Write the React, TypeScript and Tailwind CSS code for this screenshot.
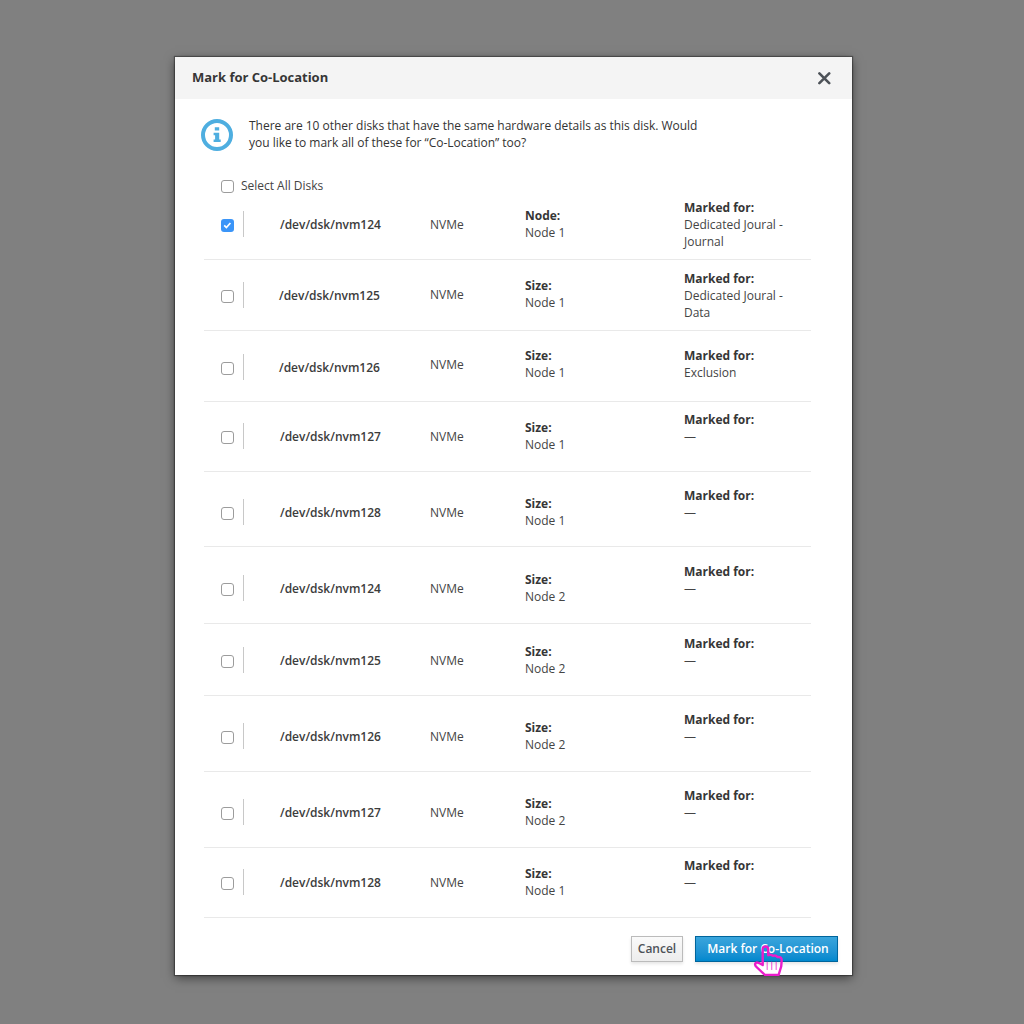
import React from "react";

type Disk = {
  name: string;
  label: string;
  node: string;
  marked: string[];
  row: string;
  check: string;
  nameX: string;
  info: string;
  mark: string;
};

const disks: Disk[] = [
  { name: "nvm124", label: "Node:", node: "Node 1", marked: ["Dedicated Joural -", "Journal"], row: "h-[61px]", check: "pt-[12px]", nameX: "pl-[36px]", info: "pt-[8px]", mark: "pt-0" },
  { name: "nvm125", label: "Size:", node: "Node 1", marked: ["Dedicated Joural -", "Data"], row: "h-[71px]", check: "pt-[22px]", nameX: "pl-[35px]", info: "pt-[17px]", mark: "pt-[10px]" },
  { name: "nvm126", label: "Size:", node: "Node 1", marked: ["Exclusion"], row: "h-[71px]", check: "pt-[23px]", nameX: "pl-[35px]", info: "pt-[16px]", mark: "pt-[16px]" },
  { name: "nvm127", label: "Size:", node: "Node 1", marked: ["—"], row: "h-[70px]", check: "pt-[21px]", nameX: "pl-[36px]", info: "pt-[17px]", mark: "pt-[9px]" },
  { name: "nvm128", label: "Size:", node: "Node 1", marked: ["—"], row: "h-[75px]", check: "pt-[27px]", nameX: "pl-[36px]", info: "pt-[23px]", mark: "pt-[15px]" },
  { name: "nvm124", label: "Size:", node: "Node 2", marked: ["—"], row: "h-[77px]", check: "pt-[28px]", nameX: "pl-[36px]", info: "pt-[24px]", mark: "pt-[16px]" },
  { name: "nvm125", label: "Size:", node: "Node 2", marked: ["—"], row: "h-[72px]", check: "pt-[23px]", nameX: "pl-[36px]", info: "pt-[19px]", mark: "pt-[11px]" },
  { name: "nvm126", label: "Size:", node: "Node 2", marked: ["—"], row: "h-[76px]", check: "pt-[27px]", nameX: "pl-[36px]", info: "pt-[23px]", mark: "pt-[15px]" },
  { name: "nvm127", label: "Size:", node: "Node 2", marked: ["—"], row: "h-[76px]", check: "pt-[27px]", nameX: "pl-[36px]", info: "pt-[23px]", mark: "pt-[15px]" },
  { name: "nvm128", label: "Size:", node: "Node 1", marked: ["—"], row: "h-[70px]", check: "pt-[21px]", nameX: "pl-[36px]", info: "pt-[17px]", mark: "pt-[9px]" },
];

function Checkbox({ checked = false }: { checked?: boolean }) {
  return checked ? (
    <span className="flex h-[13px] w-[13px] shrink-0 items-center justify-center rounded-[3px] bg-[#3b95f8]">
      <svg className="h-[13px] w-[13px]" viewBox="0 0 13 13" fill="none" stroke="#fff" strokeWidth="1.7">
        <path d="M3.2 6.3 5.4 8.5 9.4 4" />
      </svg>
    </span>
  ) : (
    <span className="h-[13px] w-[13px] shrink-0 rounded-[3px] border border-[#9c9c9c] bg-white" />
  );
}

function DiskRow({ disk, checked }: { disk: Disk; checked: boolean }) {
  return (
    <div className={`grid grid-cols-[226px_95px_159px_1fr] border-b border-[#e9e9e9] ${disk.row}`}>
      <div className={`flex items-start pl-[17px] ${disk.check}`}>
        <div className="flex h-[26px] w-[23px] items-end border-r border-[#c8c8c8] pb-[5px]">
          <Checkbox checked={checked} />
        </div>
        <span className={`pt-[5px] font-semibold text-[#3c3c3c] ${disk.nameX}`}>/dev/dsk/{disk.name}</span>
      </div>
      <div className={disk.info}>
        <div className="pt-[9px]">NVMe</div>
      </div>
      <div className={disk.info}>
        <div className="font-bold text-[#363636]">{disk.label}</div>
        <div>{disk.node}</div>
      </div>
      <div className={disk.mark}>
        <div className="font-bold text-[#363636]">Marked for:</div>
        {disk.marked.map((line) => (
          <div key={line}>{line}</div>
        ))}
      </div>
    </div>
  );
}

export default function App() {
  return (
    <div className="h-[1024px] w-[1024px] overflow-hidden bg-[#808080] pl-[175px] pt-[57px] font-['Open_Sans','Noto_Sans',sans-serif] text-[12px] leading-[17px] tracking-[-0.015px] text-[#444]">
      <div className="flex h-[918px] w-[677px] flex-col bg-white shadow-[0_0_1px_1px_rgba(0,0,0,0.35),0_3px_10px_rgba(0,0,0,0.5)]">
        <header className="flex h-[42px] shrink-0 items-center justify-between bg-[#f4f4f4] pl-[17px] pr-[21px]">
          <h1 className="pb-px text-[13px] font-bold text-[#363636]">Mark for Co-Location</h1>
          <svg className="h-[14px] w-[14px]" viewBox="0 0 14 14" stroke="#4d5258" strokeWidth="2.6" strokeLinecap="round">
            <path d="M2.4 2.4 12.2 12.2M12.2 2.4 2.4 12.2" />
          </svg>
        </header>
        <div className="flex h-[78px] shrink-0 pl-[26px] pt-[18px]">
          <svg className="mt-[2px] h-[32px] w-[32px] shrink-0" viewBox="0 0 32 32" fill="#4eaee0">
            <circle cx="16" cy="16" r="14" fill="none" stroke="#4eaee0" strokeWidth="4" />
            <path d="M13.8 8.2h4.4v3.4h-4.4zM12.6 13.8h5.6v6.7h1.5v2.4h-7.1v-2.4h1.5v-4.3h-1.5z" />
          </svg>
          <p className="pl-4 text-[#333]">
            There are 10 other disks that have the same hardware details as this disk. Would
            <br />
            you like to mark all of these for “Co-Location” too?
          </p>
        </div>
        <div className="flex h-[22px] shrink-0 items-start pl-[46px]">
          <span className="flex pt-[3px]"><Checkbox /></span>
          <span className="pl-[7px]">Select All Disks</span>
        </div>
        <div className="ml-[29px] w-[607px] shrink-0">
          {disks.map((disk, i) => (
            <DiskRow key={i} disk={disk} checked={i === 0} />
          ))}
        </div>
        <footer className="flex justify-end gap-3 pr-[14px] pt-[18px]">
          <button className="h-[26px] w-[52px] border border-[#bbb] bg-linear-to-b from-[#fafafa] to-[#ededed] pb-[2px] font-semibold text-[#4d5258] shadow-[0_2px_3px_rgba(3,3,3,0.1)]">
            Cancel
          </button>
          <button className="relative h-[26px] w-[143px] border border-[#00659c] bg-linear-to-b from-[#39a5dc] to-[#0088ce] pb-[2px] pl-[3px] font-semibold text-white shadow-[0_2px_3px_rgba(3,3,3,0.1)]">
            Mark for Co-Location
            <svg className="absolute left-[57px] top-[7px] h-[32px] w-[32px]" viewBox="0 0 32 32" fill="none" stroke="#ea1ccb" strokeWidth="2.4" strokeLinejoin="round" strokeLinecap="round">
              <path d="M9.7 20.5V5.2Q9.7 2.5 12.4 2.5Q15.2 2.5 15.2 5.2V11.2Q18.3 10 19.7 11.8Q23 10.8 24.2 13Q28.8 12.5 28.7 16.2L28.2 22.5 25.6 31H12L3 22.5Q1 19.7 3.4 18.6Q5 18 9.7 21" />
              <path d="M14.2 18v7.5M18.7 18v7.5M23.2 18v7.5" strokeWidth="1.2" strokeOpacity="0.65" />
            </svg>
          </button>
        </footer>
      </div>
    </div>
  );
}
